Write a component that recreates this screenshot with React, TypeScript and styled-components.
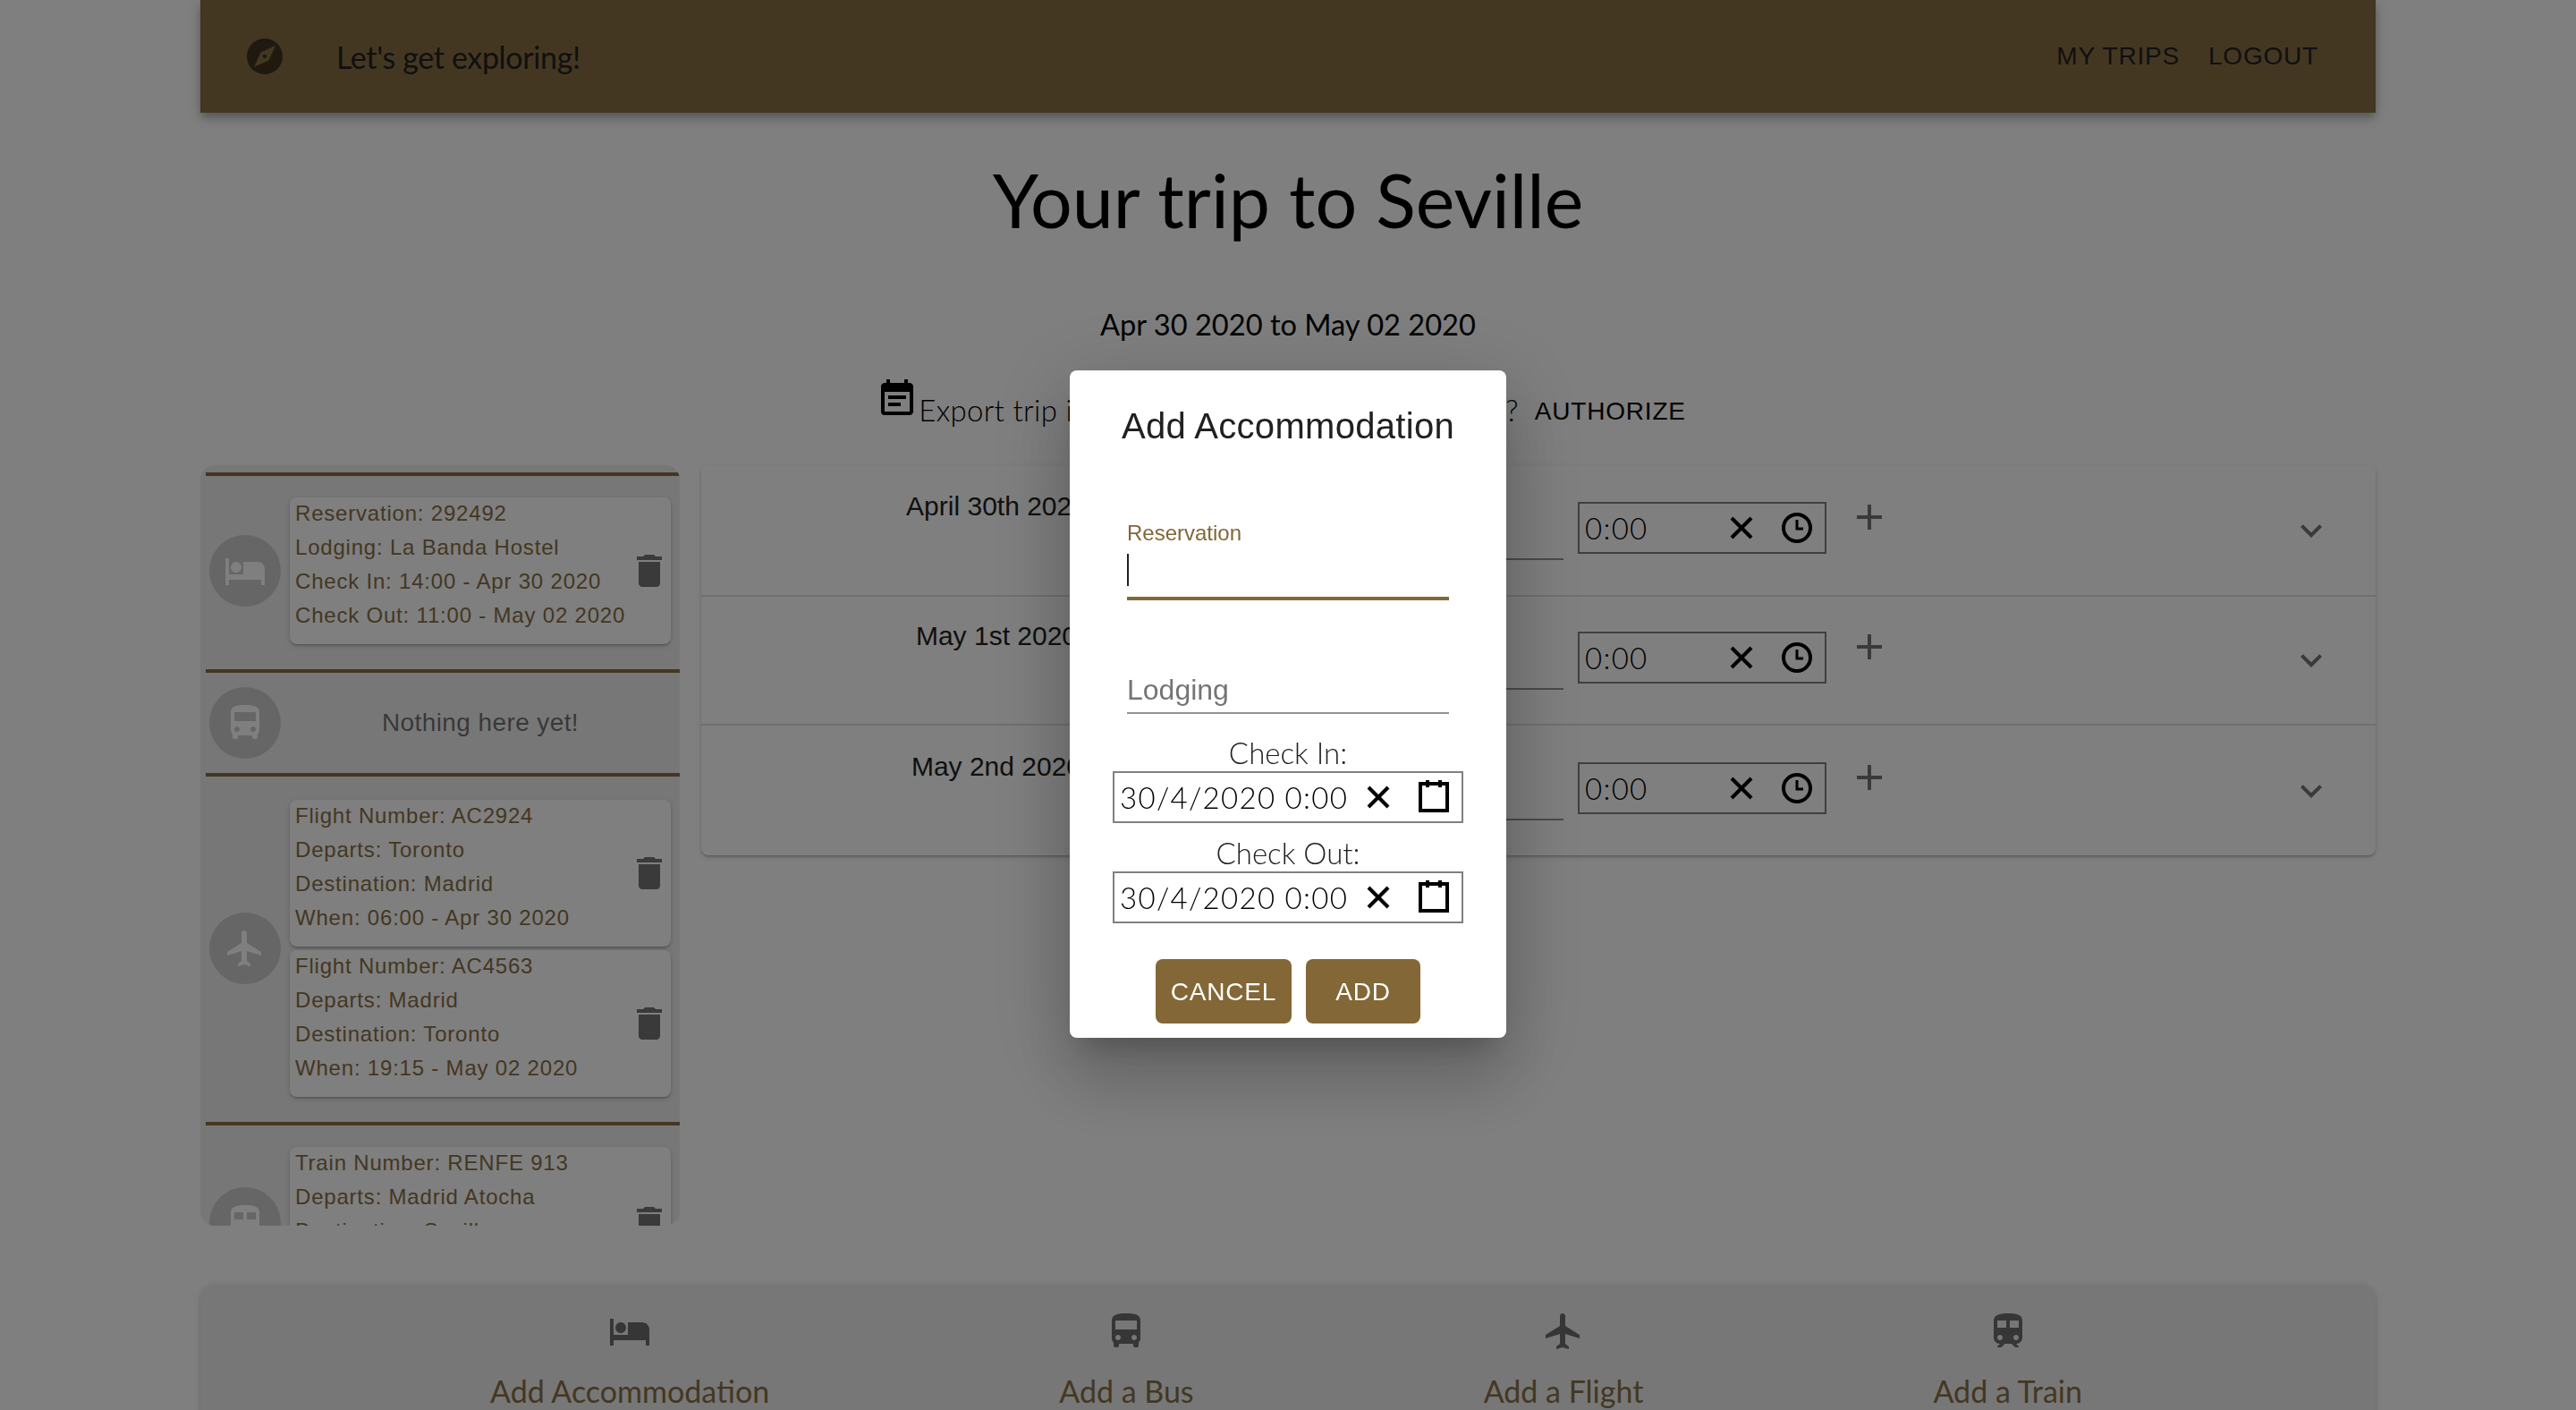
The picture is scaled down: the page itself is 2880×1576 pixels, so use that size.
import React from 'react'
import styled, { createGlobalStyle } from 'styled-components'
import {
    MdHotel,
    MdDirectionsBus,
    MdFlight,
    MdTrain,
    MdDelete,
    MdExpandMore,
    MdExplore,
    MdEventNote,
    MdAdd,
} from 'react-icons/md'

const brown = '#836737'
const barBrown = '#886e44'
const sans = '"Liberation Sans", Arial, sans-serif'
const round = 'Lato, "Noto Sans", sans-serif'

const GlobalStyle = createGlobalStyle`
    html, body {
        margin: 0;
        padding: 0;
        height: 100%;
        overflow: hidden;
        background: #fff;
    }
    * {
        box-sizing: border-box;
    }
`

const Page = styled.div`
    width: 2880px;
    height: 1576px;
    overflow: hidden;
    padding: 0 224px;
    color: #000;
`

const NavBar = styled.header`
    height: 126px;
    display: flex;
    align-items: center;
    padding: 0 64px 0 48px;
    background: ${barBrown};
    color: #212121;
    box-shadow: 0 4px 8px -2px rgba(0, 0, 0, 0.2), 0 8px 10px 0 rgba(0, 0, 0, 0.14), 0 2px 20px 0 rgba(0, 0, 0, 0.12);
`

const NavIcon = styled.span`
    display: flex;
    color: rgba(0, 0, 0, 0.54);
    font-size: 48px;
    margin-right: 56px;
`

const NavTitle = styled.div`
    font-family: ${round};
    font-size: 34px;
    letter-spacing: -0.35px;
    flex: 1;
`

const NavLink = styled.span`
    font-family: ${sans};
    font-size: 28px;
    letter-spacing: 0.8px;
    margin-left: 32px;
`

const Title = styled.h1`
    margin: 38px 0 0;
    height: 120px;
    line-height: 120px;
    text-align: center;
    font-family: ${round};
    font-weight: 400;
    font-size: 82.5px;
`

const DateRange = styled.div`
    height: 48px;
    margin-top: 55px;
    line-height: 48px;
    text-align: center;
    font-family: ${round};
    font-size: 32.6px;
`

const ExportRow = styled.div`
    height: 133px;
    padding-top: 35px;
    display: flex;
    justify-content: center;
    align-items: flex-start;
    font-size: 48px;
`

const ExportText = styled.span`
    font-family: ${round};
    font-weight: 300;
    font-size: 33px;
    letter-spacing: 0.3px;
    line-height: 40px;
    margin-top: 16px;
    white-space: pre;
`

const PlainButton = styled.span`
    font-family: ${sans};
    font-size: 28px;
    letter-spacing: 0.8px;
    line-height: 40px;
    margin-top: 18px;
    padding: 0 16px 0 18px;
`

const Main = styled.main`
    display: flex;
    gap: 24px;
    align-items: flex-start;
`

const Sidebar = styled.aside`
    width: 536px;
    height: 850px;
    flex: none;
    overflow: hidden;
    background: #eee;
    border-radius: 16px;
    padding: 8px 0 0 6px;
`

const Group = styled.section<{ $top?: number; $empty?: boolean }>`
    display: flex;
    align-items: center;
    gap: 10px;
    border-top: 4px solid ${barBrown};
    padding: ${(p) => (p.$empty ? '16px 10px 16px 4px' : `${p.$top ?? 24}px 10px 28px 4px`)};
`

const Avatar = styled.span`
    width: 80px;
    height: 80px;
    flex: none;
    border-radius: 50%;
    background: #ccc;
    color: #fff;
    display: flex;
    align-items: center;
    justify-content: center;
    font-size: 48px;
`

const CardStack = styled.div`
    flex: 1;
    display: flex;
    flex-direction: column;
    gap: 4px;
`

const Card = styled.article<{ $height: number }>`
    height: ${(p) => p.$height}px;
    display: flex;
    align-items: center;
    justify-content: space-between;
    padding-left: 6px;
    background: #fff;
    border-radius: 8px;
    box-shadow: 0 2px 2px -2px rgba(0, 0, 0, 0.2), 0 2px 2px 0 rgba(0, 0, 0, 0.14), 0 2px 6px 0 rgba(0, 0, 0, 0.12);
`

const CardLines = styled.div`
    align-self: flex-start;
    margin-top: -1px;
    color: ${barBrown};
    font-family: ${sans};
    font-size: 24px;
    letter-spacing: 0.8px;
    line-height: 38px;
`

const Trash = styled.span`
    display: flex;
    color: rgba(0, 0, 0, 0.54);
    font-size: 48px;
`

const EmptyText = styled.div`
    flex: 1;
    text-align: center;
    color: rgba(0, 0, 0, 0.54);
    font-family: ${sans};
    font-size: 28px;
    letter-spacing: 0.4px;
`

const Days = styled.div`
    flex: 1;
    background: #fff;
    border-radius: 8px;
    box-shadow: 0 2px 2px -2px rgba(0, 0, 0, 0.2), 0 2px 2px 0 rgba(0, 0, 0, 0.14), 0 2px 6px 0 rgba(0, 0, 0, 0.12);
`

const DayRow = styled.div<{ $height: number; $last?: boolean }>`
    height: ${(p) => p.$height}px;
    display: flex;
    align-items: center;
    padding-right: 48px;
    border-bottom: ${(p) => (p.$last ? 'none' : '2px solid rgba(0, 0, 0, 0.12)')};
`

const DayLabel = styled.div`
    width: 660px;
    margin-bottom: 54px;
    text-align: center;
    color: #212121;
    font-family: ${sans};
    font-size: 30px;
`

const DayInput = styled.div`
    width: 304px;
    height: 66px;
    margin-right: 16px;
    border-bottom: 2px solid rgba(0, 0, 0, 0.42);
`

const PickerBox = styled.div<{ $width: number }>`
    width: ${(p) => p.$width}px;
    height: 58px;
    flex: none;
    display: flex;
    align-items: center;
    padding: 0 12px 0 6px;
    border: 2px solid #808080;
    background: #fff;
    color: #000;
    svg {
        flex: none;
    }
`

const TimeBox = styled(PickerBox)`
    margin-bottom: 6px;
`

const PickerValue = styled.span`
    flex: 1;
    min-width: 0;
    font-family: ${round};
    font-weight: 300;
    font-size: 33px;
    letter-spacing: 1.3px;
    white-space: pre;
`

const IconGap = styled.span`
    width: 24px;
    flex: none;
`

const PlusIcon = styled.span`
    display: flex;
    margin: 0 0 30px 24px;
    color: rgba(0, 0, 0, 0.54);
    font-size: 48px;
`

const Chevron = styled.span`
    display: flex;
    margin-left: auto;
    color: rgba(0, 0, 0, 0.54);
    font-size: 48px;
`

const BottomBar = styled.nav`
    margin-top: 67px;
    height: 180px;
    display: flex;
    justify-content: space-evenly;
    padding: 27px 4px 0 0;
    background: #eee;
    border-radius: 16px;
    box-shadow: 0 0 8px rgba(0, 0, 0, 0.14), 0 2px 2px 0 rgba(0, 0, 0, 0.14);
`

const BarItem = styled.div`
    display: flex;
    flex-direction: column;
    align-items: center;
    gap: 18px;
    color: rgba(0, 0, 0, 0.54);
    font-size: 48px;
`

const BarText = styled.span`
    color: ${barBrown};
    font-family: ${round};
    font-size: 34px;
    line-height: 50px;
`

const Backdrop = styled.div`
    position: fixed;
    inset: 0;
    display: flex;
    align-items: center;
    justify-content: center;
    background: rgba(0, 0, 0, 0.5);
`

const Dialog = styled.div`
    width: 488px;
    height: 746px;
    margin-top: -2px;
    padding-top: 32px;
    background: #fff;
    border-radius: 8px;
    box-shadow: 0 22px 30px -14px rgba(0, 0, 0, 0.2), 0 48px 76px 6px rgba(0, 0, 0, 0.14), 0 18px 92px 16px rgba(0, 0, 0, 0.12);
`

const DialogTitle = styled.h2`
    margin: 0 0 75px;
    height: 60px;
    line-height: 60px;
    text-align: center;
    color: #212121;
    font-family: ${sans};
    font-weight: 400;
    font-size: 40px;
    letter-spacing: 0.3px;
`

const FieldWrap = styled.div`
    width: 360px;
    margin: 0 auto;
`

const FloatingLabel = styled.div`
    height: 30px;
    line-height: 30px;
    color: ${brown};
    font-family: ${sans};
    font-size: 24px;
`

const ActiveInput = styled.div`
    height: 60px;
    padding-top: 8px;
    border-bottom: 4px solid ${brown};
`

const Caret = styled.span`
    display: block;
    width: 2px;
    height: 36px;
    background: #212121;
`

const IdleInput = styled.div`
    height: 58px;
    margin-top: 69px;
    padding-top: 13px;
    line-height: 36px;
    border-bottom: 2px solid rgba(0, 0, 0, 0.42);
    color: #757575;
    font-family: ${sans};
    font-size: 32px;
`

const PickerLabel = styled.div<{ $gap: number }>`
    height: 38px;
    margin-top: ${(p) => p.$gap}px;
    line-height: 35px;
    text-align: center;
    color: #212121;
    font-family: ${round};
    font-weight: 300;
    font-size: 33px;
`

const PickerCenter = styled.div`
    display: flex;
    justify-content: center;
`

const Actions = styled.div`
    margin-top: 40px;
    display: flex;
    justify-content: center;
    gap: 16px;
`

const ActionButton = styled.button<{ $width: number }>`
    width: ${(p) => p.$width}px;
    height: 72px;
    padding: 2px 0 0;
    border: none;
    border-radius: 8px;
    background: ${brown};
    color: #fff;
    font-family: ${sans};
    font-size: 28px;
    letter-spacing: 0.8px;
`

const ClearIcon = () => (
    <svg width="38" height="38" viewBox="0 0 19 19" stroke="#000" strokeWidth="2" fill="none">
        <line x1="4" y1="4" x2="15" y2="15" />
        <line x1="15" y1="4" x2="4" y2="15" />
    </svg>
)

const CalendarIcon = () => (
    <svg width="38" height="38" viewBox="0 0 19 19" stroke="#000" strokeWidth="2" fill="none">
        <rect x="2" y="2" width="15" height="15" />
        <line x1="6" y1="0" x2="6" y2="4" />
        <line x1="13" y1="0" x2="13" y2="4" />
    </svg>
)

const ClockIcon = () => (
    <svg width="38" height="38" viewBox="0 0 19 19" stroke="#000" strokeWidth="2" fill="none">
        <circle cx="9.5" cy="9.5" r="7.5" />
        <path d="M9.5 5v5h3.5" strokeWidth="1.5" />
    </svg>
)

const days = [
    { label: 'April 30th 2020', height: 147 },
    { label: 'May 1st 2020', height: 144 },
    { label: 'May 2nd 2020', height: 145, last: true },
]

const accommodation = ['Reservation: 292492', 'Lodging: La Banda Hostel', 'Check In: 14:00 - Apr 30 2020', 'Check Out: 11:00 - May 02 2020']

const flights = [
    ['Flight Number: AC2924', 'Departs: Toronto', 'Destination: Madrid', 'When: 06:00 - Apr 30 2020'],
    ['Flight Number: AC4563', 'Departs: Madrid', 'Destination: Toronto', 'When: 19:15 - May 02 2020'],
]

const train = ['Train Number: RENFE 913', 'Departs: Madrid Atocha', 'Destination: Seville', 'When: 16:00 - May 01 2020']

const TripCard = ({ lines, height = 164 }: { lines: string[]; height?: number }) => (
    <Card $height={height}>
        <CardLines>
            {lines.map((line) => (
                <div key={line}>{line}</div>
            ))}
        </CardLines>
        <Trash>
            <MdDelete />
        </Trash>
    </Card>
)

const DatePicker = () => (
    <PickerCenter>
        <PickerBox $width={392}>
            <PickerValue>30/4/2020 0:00</PickerValue>
            <ClearIcon />
            <IconGap />
            <CalendarIcon />
        </PickerBox>
    </PickerCenter>
)

export default function App() {
    return (
        <>
            <GlobalStyle />
            <Page>
                <NavBar>
                    <NavIcon>
                        <MdExplore />
                    </NavIcon>
                    <NavTitle>Let's get exploring!</NavTitle>
                    <NavLink>MY TRIPS</NavLink>
                    <NavLink>LOGOUT</NavLink>
                </NavBar>
                <Title>Your trip to Seville</Title>
                <DateRange>Apr 30 2020 to May 02 2020</DateRange>
                <ExportRow>
                    <MdEventNote />
                    <ExportText>Export trip itinerary to your Google Calendar ?</ExportText>
                    <PlainButton>AUTHORIZE</PlainButton>
                </ExportRow>
                <Main>
                    <Sidebar>
                        <Group>
                            <Avatar>
                                <MdHotel />
                            </Avatar>
                            <CardStack>
                                <TripCard lines={accommodation} />
                            </CardStack>
                        </Group>
                        <Group $empty>
                            <Avatar>
                                <MdDirectionsBus />
                            </Avatar>
                            <EmptyText>Nothing here yet!</EmptyText>
                        </Group>
                        <Group $top={26}>
                            <Avatar>
                                <MdFlight />
                            </Avatar>
                            <CardStack>
                                {flights.map((lines) => (
                                    <TripCard key={lines[0]} lines={lines} />
                                ))}
                            </CardStack>
                        </Group>
                        <Group>
                            <Avatar>
                                <MdTrain />
                            </Avatar>
                            <CardStack>
                                <TripCard lines={train} height={170} />
                            </CardStack>
                        </Group>
                    </Sidebar>
                    <Days>
                        {days.map((day) => (
                            <DayRow key={day.label} $height={day.height} $last={day.last}>
                                <DayLabel>{day.label}</DayLabel>
                                <DayInput />
                                <TimeBox $width={278}>
                                    <PickerValue>0:00</PickerValue>
                                    <ClearIcon />
                                    <IconGap />
                                    <ClockIcon />
                                </TimeBox>
                                <PlusIcon>
                                    <MdAdd />
                                </PlusIcon>
                                <Chevron>
                                    <MdExpandMore />
                                </Chevron>
                            </DayRow>
                        ))}
                    </Days>
                </Main>
                <BottomBar>
                    <BarItem>
                        <MdHotel />
                        <BarText>Add Accommodation</BarText>
                    </BarItem>
                    <BarItem>
                        <MdDirectionsBus />
                        <BarText>Add a Bus</BarText>
                    </BarItem>
                    <BarItem>
                        <MdFlight />
                        <BarText>Add a Flight</BarText>
                    </BarItem>
                    <BarItem>
                        <MdTrain />
                        <BarText>Add a Train</BarText>
                    </BarItem>
                </BottomBar>
            </Page>
            <Backdrop>
                <Dialog>
                    <DialogTitle>Add Accommodation</DialogTitle>
                    <FieldWrap>
                        <FloatingLabel>Reservation</FloatingLabel>
                        <ActiveInput>
                            <Caret />
                        </ActiveInput>
                        <IdleInput>Lodging</IdleInput>
                    </FieldWrap>
                    <PickerLabel $gap={26}>Check In:</PickerLabel>
                    <DatePicker />
                    <PickerLabel $gap={16}>Check Out:</PickerLabel>
                    <DatePicker />
                    <Actions>
                        <ActionButton $width={152}>CANCEL</ActionButton>
                        <ActionButton $width={128}>ADD</ActionButton>
                    </Actions>
                </Dialog>
            </Backdrop>
        </>
    )
}
